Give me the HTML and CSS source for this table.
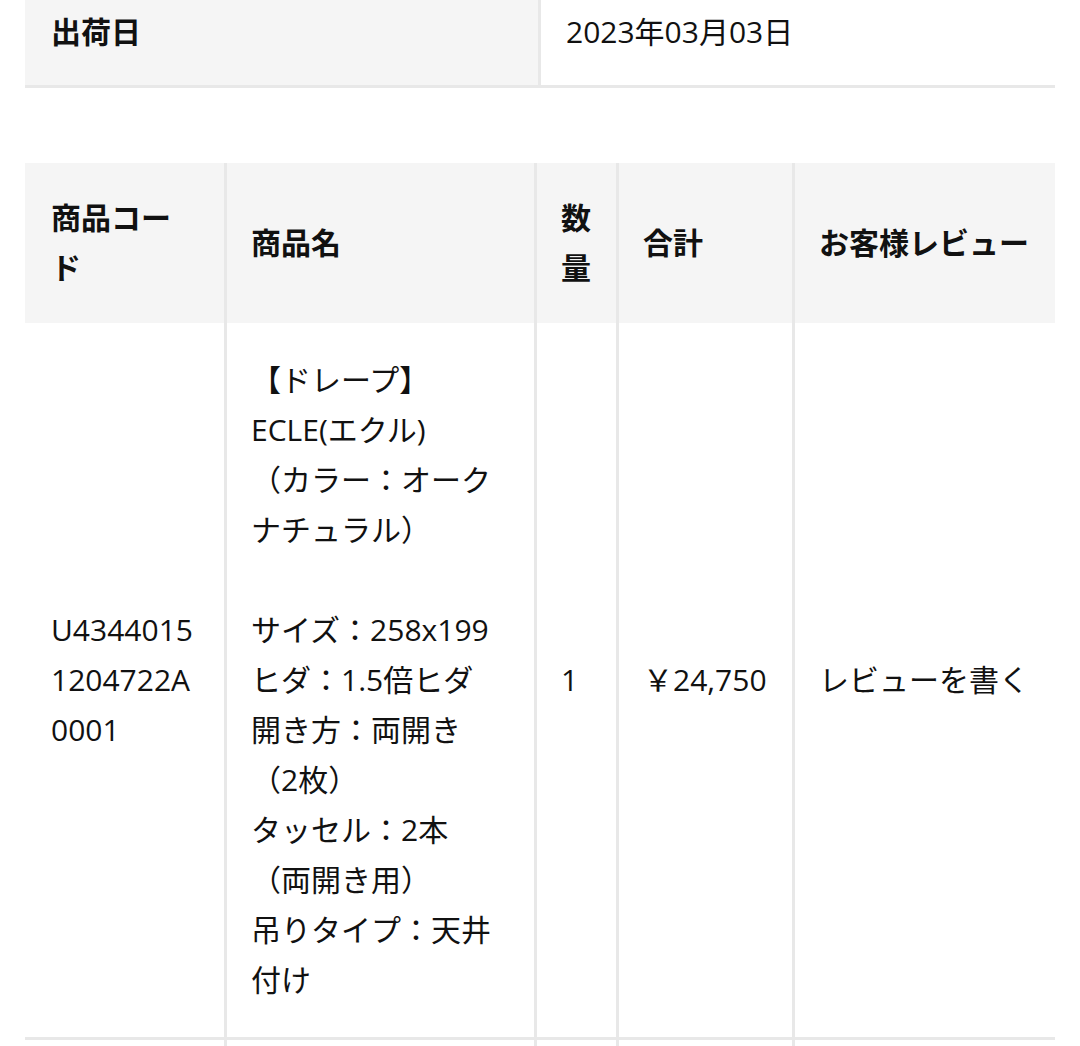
FILE: index.html
```html
<!DOCTYPE html>
<html lang="ja">
<head>
<meta charset="utf-8">
<title>注文詳細</title>
<link rel="stylesheet" href="styles.css">
</head>
<body>
<main class="page">
  <table class="info">
    <tr>
      <th class="info-label">出荷日</th>
      <td class="info-value">2023年03月03日</td>
    </tr>
  </table>

  <table class="items">
    <colgroup>
      <col class="c-code">
      <col class="c-name">
      <col class="c-qty">
      <col class="c-total">
      <col class="c-review">
    </colgroup>
    <thead>
      <tr>
        <th>商品コード</th>
        <th>商品名</th>
        <th>数量</th>
        <th>合計</th>
        <th>お客様レビュー</th>
      </tr>
    </thead>
    <tbody>
      <tr>
        <td class="code">U43440151204722A0001</td>
        <td class="name">【ドレープ】<br>ECLE(エクル)<br>（カラー：オーク<br>ナチュラル）<br><br>サイズ：258x199<br>ヒダ：1.5倍ヒダ<br>開き方：両開き<br>（2枚）<br>タッセル：2本<br>（両開き用）<br>吊りタイプ：天井<br>付け</td>
        <td>1</td>
        <td>￥24,750</td>
        <td>レビューを書く</td>
      </tr>
      <tr>
        <td class="code">&nbsp;</td>
        <td class="name">&nbsp;</td>
        <td>&nbsp;</td>
        <td>&nbsp;</td>
        <td>&nbsp;</td>
      </tr>
    </tbody>
  </table>
</main>
</body>
</html>
```

FILE: styles.css
```css
html, body {
  margin: 0;
  padding: 0;
  background: #ffffff;
}

body {
  font-family: "Open Sans", "Noto Sans CJK JP", sans-serif;
  font-size: 30px;
  line-height: 50px;
  color: #111111;
}

.page {
  margin-top: -23px;
  padding: 0 25px;
}

table {
  border-collapse: separate;
  border-spacing: 0;
  width: 1030px;
  table-layout: fixed;
}

th {
  font-weight: 700;
  text-align: left;
}

/* info table */
.info {
  margin-bottom: 75px;
}

.info th,
.info td {
  padding: 30px 25px 28px;
  border-bottom: 3px solid #e8e8e8;
  vertical-align: top;
}

.info-label {
  width: 516px;
  box-sizing: border-box;
  background: #f5f5f5;
  padding-left: 26px !important;
  border-right: 3px solid #e8e8e8;
}

.info-value {
  background: #ffffff;
}

/* items table */
.c-code { width: 202px; }
.c-name { width: 310px; }
.c-qty { width: 82px; }
.c-total { width: 176px; }
.c-review { width: 260px; }

.items th,
.items td {
  padding: 32px 24px;
  border-right: 3px solid #e8e8e8;
  vertical-align: middle;
  text-align: left;
}

.items th:last-child,
.items td:last-child {
  border-right: none;
  padding-right: 16px;
}

.items th {
  padding-top: 30px;
  padding-bottom: 30px;
  background: #f5f5f5;
}

.items th:first-child,
.items td:first-child {
  padding-left: 26px;
  padding-right: 30px;
}

.items td {
  border-bottom: 3px solid #e8e8e8;
}

.items .code {
  word-break: break-all;
}
```
